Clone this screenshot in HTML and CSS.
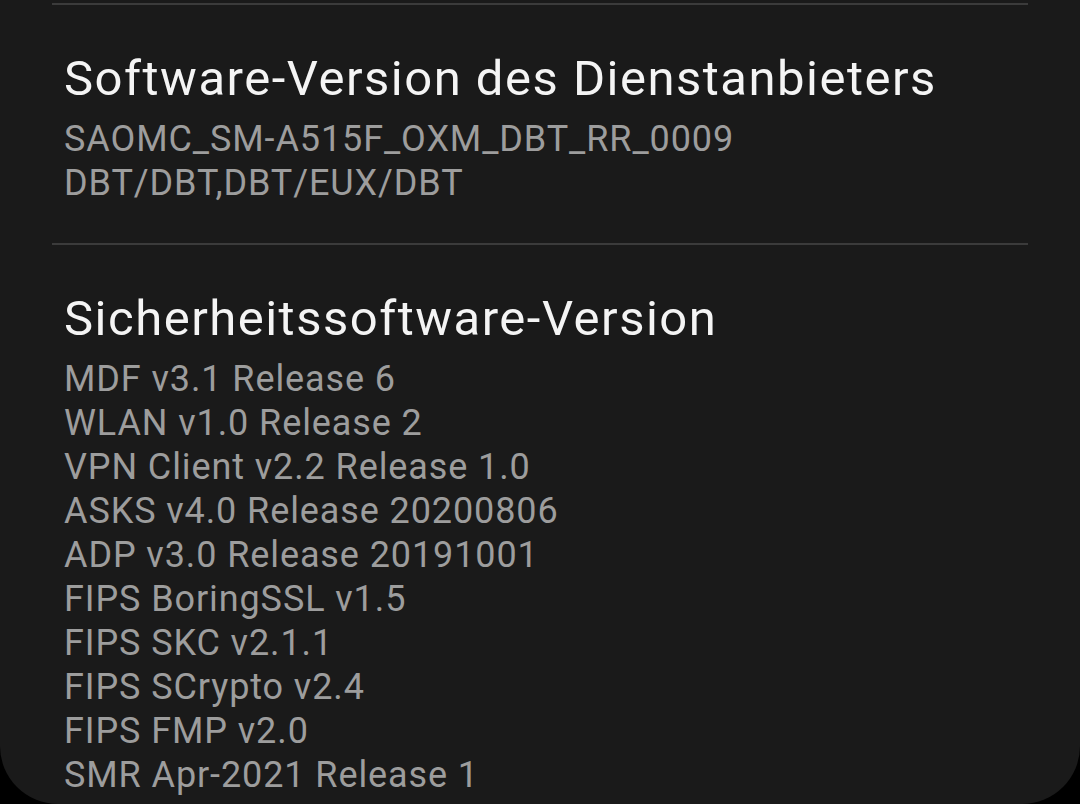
FILE: index.html
```html
<!DOCTYPE html>
<html lang="de">
<head>
    <meta charset="UTF-8">
    <meta name="viewport" content="width=device-width, initial-scale=1.0">
    <title>Softwareinformationen</title>
    <link rel="stylesheet" href="styles.css">
</head>
<body>
    <div id="card">
        <div class="divider"></div>
        <div class="item">
            <h2>Software-Version des Dienstanbieters</h2>
            <p>SAOMC_SM-A515F_OXM_DBT_RR_0009</p>
            <p>DBT/DBT,DBT/EUX/DBT</p>
        </div>

        <div class="divider"></div>
        <div class="item">
            <h2>Sicherheitssoftware-Version</h2>
            <p>MDF v3.1 Release 6</p>
            <p>WLAN v1.0 Release 2</p>
            <p>VPN Client v2.2 Release 1.0</p>
            <p>ASKS v4.0 Release 20200806</p>
            <p>ADP v3.0 Release 20191001</p>
            <p>FIPS BoringSSL v1.5</p>
            <p>FIPS SKC v2.1.1</p>
            <p>FIPS SCrypto v2.4</p>
            <p>FIPS FMP v2.0</p>
            <p>SMR Apr-2021 Release 1</p>
        </div>
    </div>
</body>
</html>
```
FILE: styles.css
```css
body {
    font-family: 'Roboto', 'Noto Sans', sans-serif;
    margin: 0;
    background-color: #000;
    color: #f2f2f2;
}

#card {
    height: 804px;
    box-sizing: border-box;
    padding-top: 3px;
    background-color: #1a1a1a;
    border-radius: 0 0 58px 58px;
    overflow: hidden;
}

.divider {
    height: 2px;
    margin: 0 52px;
    background-color: #3b3b3b;
}

.item {
    padding: 46px 64px 38px;
}

.item h2 {
    font-size: 49px;
    font-weight: 400;
    letter-spacing: 1.5px;
    line-height: 56px;
    margin: 0 0 10px;
    color: #f4f4f4;
}

.item p {
    font-size: 36px;
    letter-spacing: 0.9px;
    line-height: 44px;
    margin: 0;
    color: #9d9d9d;
}
```
